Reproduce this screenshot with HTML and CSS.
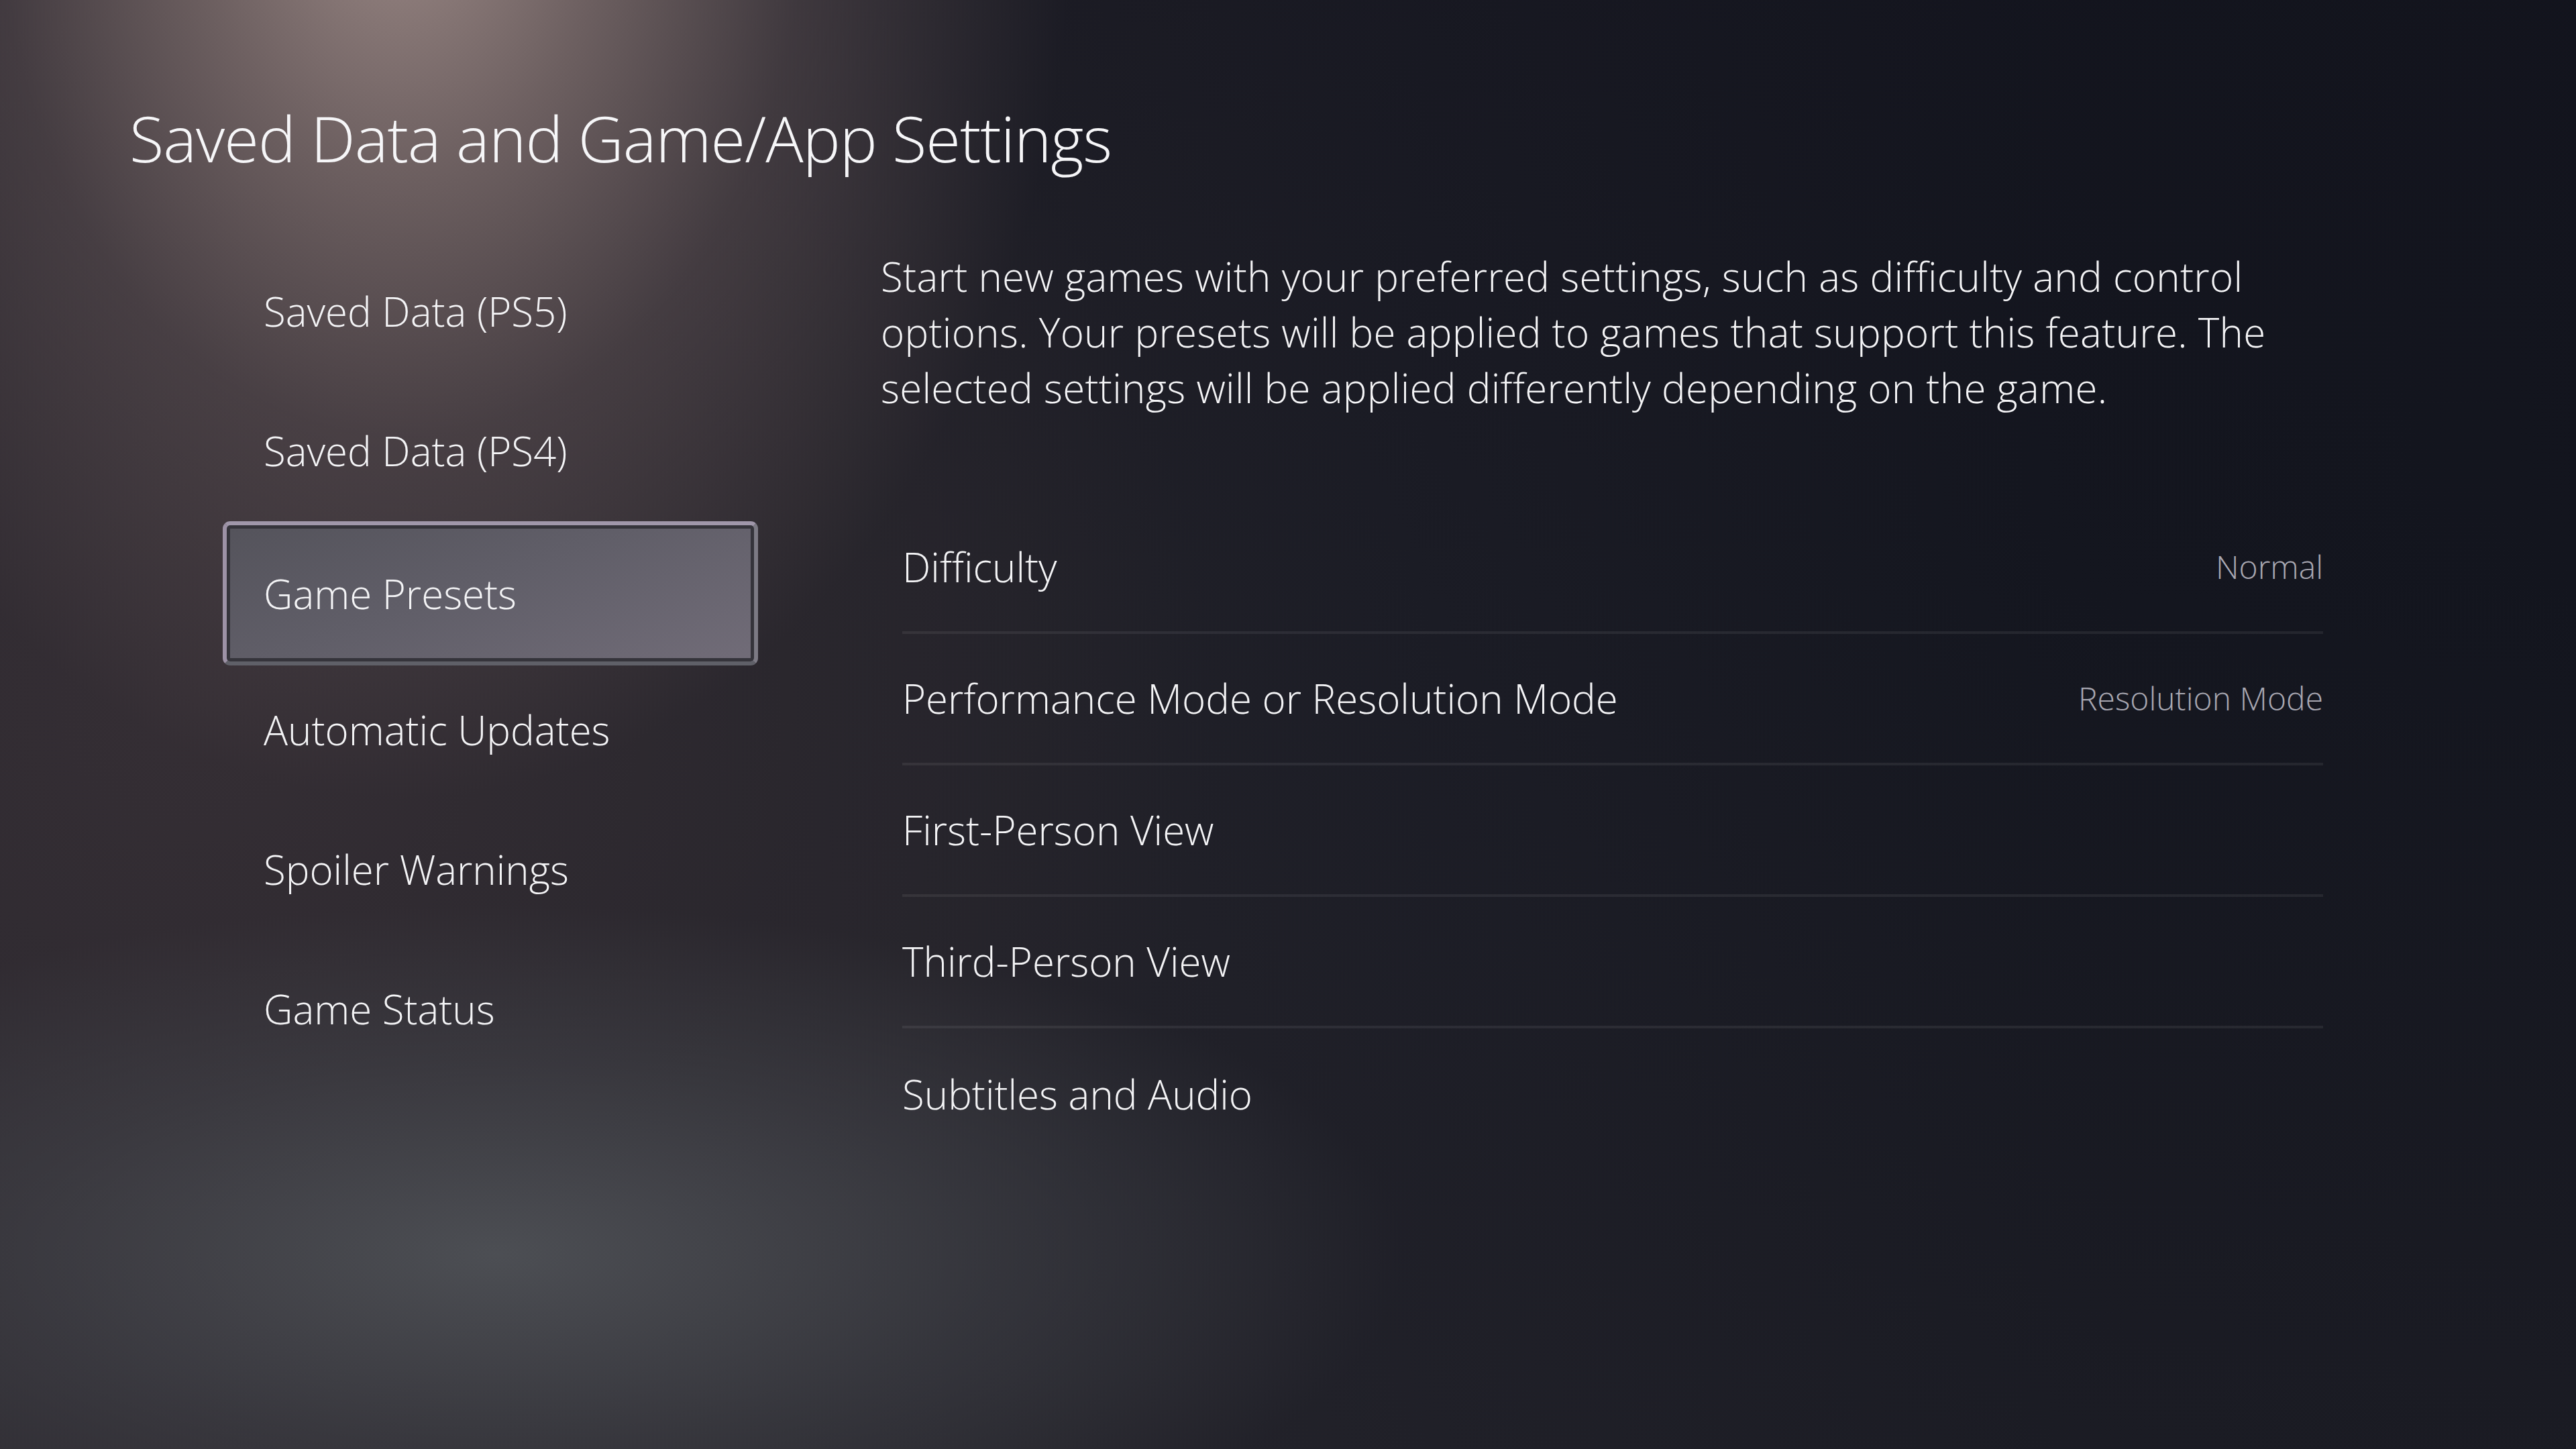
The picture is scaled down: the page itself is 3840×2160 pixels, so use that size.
FILE: index.html
```html
<!DOCTYPE html>
<html lang="en">
<head>
<meta charset="utf-8">
<title>Saved Data and Game/App Settings</title>
<link rel="stylesheet" href="styles.css">
</head>
<body>
<div class="screen">
  <h1 class="title">Saved Data and Game/App Settings</h1>
  <div class="main">
    <nav class="menu">
      <div class="menu-item">Saved Data (PS5)</div>
      <div class="menu-item">Saved Data (PS4)</div>
      <div class="menu-item selected">Game Presets</div>
      <div class="menu-item">Automatic Updates</div>
      <div class="menu-item">Spoiler Warnings</div>
      <div class="menu-item">Game Status</div>
    </nav>
    <section class="detail">
      <p class="desc">Start new games with your preferred settings, such as difficulty and control options. Your presets will be applied to games that support this feature. The selected settings will be applied differently depending on the game.</p>
      <div class="rows">
        <div class="row"><span class="label">Difficulty</span><span class="value">Normal</span></div>
        <div class="row"><span class="label">Performance Mode or Resolution Mode</span><span class="value">Resolution Mode</span></div>
        <div class="row"><span class="label">First-Person View</span></div>
        <div class="row"><span class="label">Third-Person View</span></div>
        <div class="row"><span class="label">Subtitles and Audio</span></div>
      </div>
    </section>
  </div>
</div>
</body>
</html>
```

FILE: styles.css
```css
html, body {
  margin: 0;
  padding: 0;
}
body {
  width: 3840px;
  height: 2160px;
  overflow: hidden;
  font-family: "Open Sans", "Noto Sans", "Liberation Sans", sans-serif;
  font-weight: 300;
  color: #f4f4f6;
  background-color: #1c1c24;
}
.screen {
  width: 3840px;
  height: 2160px;
  box-sizing: border-box;
  background:
    radial-gradient(ellipse 1000px 1350px at 600px -160px, rgba(166,146,142,0.92) 0%, rgba(140,122,120,0.7) 30%, rgba(110,95,97,0.4) 60%, rgba(80,70,74,0) 100%),
    radial-gradient(ellipse 1350px 520px at 740px 1870px, rgba(82,85,90,0.85) 0%, rgba(72,74,80,0.45) 55%, rgba(60,60,66,0) 100%),
    radial-gradient(ellipse 1500px 1400px at 300px 1050px, rgba(54,47,53,0.9) 0%, rgba(46,41,47,0.5) 60%, rgba(40,38,44,0) 100%),
    linear-gradient(to bottom, rgba(18,18,28,0.35) 0%, rgba(20,20,30,0) 40%, rgba(44,42,48,0.3) 100%),
    linear-gradient(to right, #2c2930 0%, #25242b 30%, #1b1c25 55%, #14161f 80%, #13151e 100%);
  padding-top: 142px;
}
.title {
  margin: 0 0 0 193px;
  font-size: 94px;
  font-weight: 300;
  line-height: 128px;
  letter-spacing: -1px;
  color: #f6f6f8;
}
.main {
  display: flex;
  align-items: flex-start;
  margin-top: 90px;
  padding-left: 332px;
  gap: 183px;
}
.menu {
  width: 798px;
  display: flex;
  flex-direction: column;
}
.menu-item {
  height: 208px;
  box-sizing: border-box;
  padding-left: 61px;
  display: flex;
  align-items: center;
  font-size: 60px;
  line-height: 82px;
  color: #f4f4f6;
  white-space: nowrap;
}
.menu-item.selected {
  height: 215px;
  margin: 1px 0 -8px;
  border: 6px solid #8f8a99;
  border-top-color: #a097aa;
  border-left-color: #9d92a6;
  border-bottom-color: #5f6068;
  border-right-color: #7c7a84;
  border-radius: 11px;
  padding-left: 55px;
  background: linear-gradient(160deg, #54535b 0%, #605e68 45%, #716c78 100%);
  box-shadow: inset 0 0 0 5px #35343b;
}
.detail {
  width: 2150px;
  margin-top: 11px;
}
.desc {
  margin: 0;
  font-size: 60px;
  line-height: 83px;
  letter-spacing: 0.3px;
  color: #f4f4f6;
}
.rows {
  margin-top: 129px;
  margin-left: 32px;
  width: 2118px;
}
.row {
  height: 196px;
  box-sizing: border-box;
  display: flex;
  align-items: center;
  justify-content: space-between;
  border-bottom: 4px solid rgba(255,255,255,0.07);
}
.row:last-child {
  border-bottom: none;
}
.label {
  font-size: 60px;
  line-height: 82px;
  color: #f4f4f6;
}
.value {
  font-size: 48px;
  line-height: 64px;
  color: #a9a8b2;
}
```
